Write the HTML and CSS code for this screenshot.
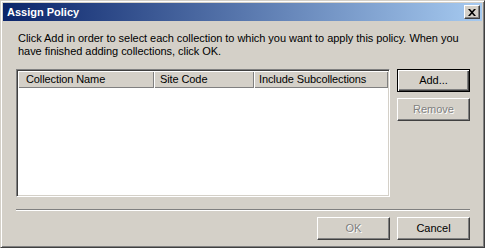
FILE: index.html
```html
<!DOCTYPE html>
<html>
<head>
<meta charset="utf-8">
<link rel="stylesheet" href="styles.css">
</head>
<body>
<div class="window">
  <div class="titlebar">
    <span class="title">Assign Policy</span>
    <div class="close"><svg width="8" height="7" viewBox="0 0 8 7"><path d="M0 0h2l2 2.3 2-2.3h2l-3 3.5 3 3.5h-2l-2-2.3-2 2.3h-2l3-3.5z" fill="#000"/></svg></div>
  </div>
  <div class="content">
    <p class="msg">Click Add in order to select each collection to which you want to apply this policy. When you<br>have finished adding collections, click OK.</p>
    <div class="main">
      <div class="list">
        <div class="header">
          <div class="col c1">Collection Name</div>
          <div class="col c2">Site Code</div>
          <div class="col c3">Include Subcollections</div>
        </div>
      </div>
      <div class="side">
        <div class="btn default">Add...</div>
        <div class="btn disabled">Remove</div>
      </div>
    </div>
    <div class="sep"></div>
    <div class="footer">
      <div class="btn disabled">OK</div>
      <div class="btn">Cancel</div>
    </div>
  </div>
</div>
</body>
</html>
```

FILE: styles.css
```css
html, body {
  margin: 0;
  padding: 0;
  background: #d4d0c8;
}
body {
  font-family: "Liberation Sans", Arial, sans-serif;
  font-size: 11px;
  color: #000;
}
.window {
  box-sizing: border-box;
  width: 485px;
  height: 248px;
  border: 1px solid;
  border-color: #d4d0c8 #404040 #404040 #d4d0c8;
  box-shadow: inset 1px 1px #fff, inset -1px -1px #808080;
  padding: 2px;
  background: #d4d0c8;
  display: flex;
  flex-direction: column;
}
.titlebar {
  height: 18px;
  background: linear-gradient(to right, #0a246a, #a6caf0);
  display: flex;
  align-items: center;
  padding-left: 4px;
  padding-right: 2px;
}
.title {
  flex: 1;
  color: #fff;
  font-weight: bold;
  font-size: 11px;
}
.close {
  box-sizing: border-box;
  width: 16px;
  height: 14px;
  background: #d4d0c8;
  border: 1px solid;
  border-color: #fff #404040 #404040 #fff;
  box-shadow: inset -1px -1px #808080;
  display: flex;
  align-items: center;
  justify-content: center;
  padding-right: 1px;
}
.close svg { display: block; }
.content {
  padding: 0 12px 0 13px;
  flex: 1;
  display: flex;
  flex-direction: column;
}
.msg {
  margin: 11px 0 11px 2px;
  line-height: 13px;
  white-space: nowrap;
  letter-spacing: -0.04px;
}
.main {
  display: flex;
  gap: 7px;
}
.list {
  box-sizing: border-box;
  width: 374px;
  height: 128px;
  border: 1px solid;
  border-color: #808080 #fff #fff #808080;
  box-shadow: inset 1px 1px #404040, inset -1px -1px #d4d0c8;
  padding: 1px;
  background: #fff;
}
.header {
  display: flex;
  height: 17px;
}
.col {
  box-sizing: border-box;
  height: 17px;
  background: #d4d0c8;
  box-shadow: inset 1px 1px #fff, inset -1px -1px #808080;
  line-height: 17px;
  white-space: nowrap;
  overflow: hidden;
  letter-spacing: -0.1px;
}
.c1 { width: 136px; padding-left: 8px; }
.c2 { width: 100px; padding-left: 6px; }
.c3 { flex: 1; padding-left: 5px; }
.side {
  display: flex;
  flex-direction: column;
  gap: 6px;
}
.btn {
  box-sizing: border-box;
  width: 73px;
  height: 23px;
  background: #d4d0c8;
  border: 1px solid;
  border-color: #fff #404040 #404040 #fff;
  box-shadow: inset -1px -1px #808080;
  display: flex;
  align-items: center;
  justify-content: center;
  padding-bottom: 1px;
}
.btn.default {
  border-color: #000;
  box-shadow: inset 1px 1px #fff, inset -1px -1px #404040, inset -2px -2px #808080;
}
.btn.disabled {
  color: #808080;
  text-shadow: 1px 1px #fff;
}
.sep {
  margin-top: 12px;
  height: 0;
  border-top: 1px solid #808080;
  border-bottom: 1px solid #fff;
}
.footer {
  margin-top: 6px;
  display: flex;
  justify-content: flex-end;
  gap: 7px;
}
```
